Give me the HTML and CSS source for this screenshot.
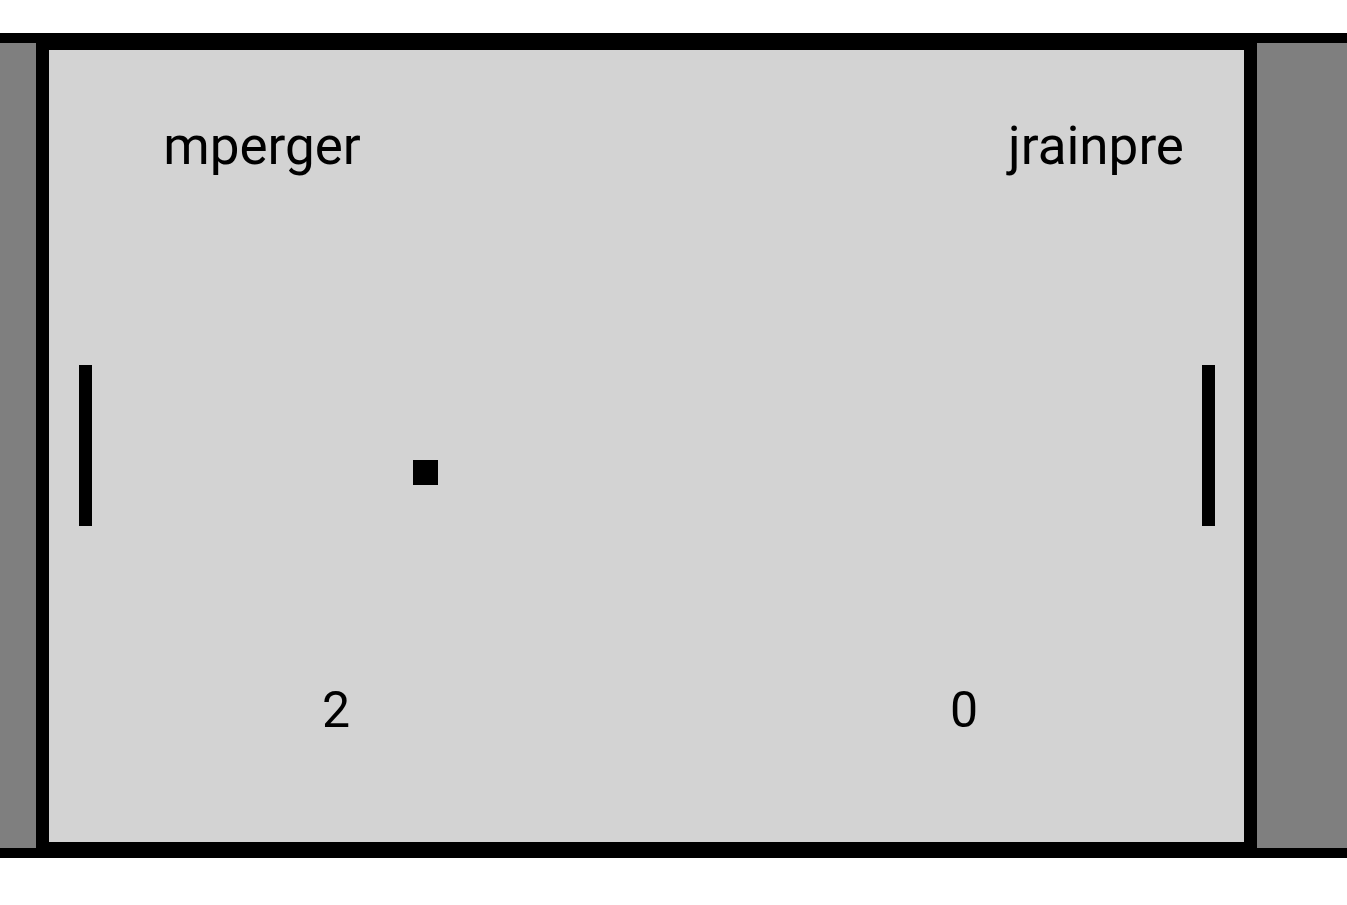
FILE: index.html
```html
<!DOCTYPE html>
<html>
<head>
<meta charset="utf-8">
<link rel="stylesheet" href="styles.css">
</head>
<body>
<div class="stage">
  <div class="court">
    <div class="field">
      <div class="label name name-left">mperger</div>
      <div class="label name name-right">jrainpre</div>
      <div class="paddle paddle-left"></div>
      <div class="paddle paddle-right"></div>
      <div class="ball"></div>
      <div class="label score score-left">2</div>
      <div class="label score score-right">0</div>
    </div>
  </div>
</div>
</body>
</html>
```
FILE: styles.css
```css
html, body {
  margin: 0;
  padding: 0;
  background: #ffffff;
}
body {
  padding-top: 33px;
  font-family: Roboto, "Liberation Sans", sans-serif;
}
.stage {
  background: #7f7f7f;
  border-top: 10px solid #000;
  border-bottom: 10px solid #000;
  height: 805px;
  display: flex;
}
.court {
  margin-left: 36px;
  width: 1221px;
  height: 805px;
  box-sizing: border-box;
  background: #000;
  padding: 7px 13px 6px 13px;
}
.field {
  position: relative;
  width: 100%;
  height: 100%;
  background: #d3d3d3;
}
.label {
  position: absolute;
  width: 240px;
  text-align: center;
  color: #000;
}
.name {
  top: 70px;
  font-size: 53px;
  line-height: 53px;
}
.name-left { left: 93px; }
.name-right { left: 927px; }
.score {
  top: 635px;
  font-size: 50px;
  line-height: 50px;
}
.score-left { left: 167px; }
.score-right { left: 795px; }
.paddle {
  position: absolute;
  top: 315px;
  width: 13px;
  height: 161px;
  background: #000;
}
.paddle-left { left: 30px; }
.paddle-right { left: 1153px; }
.ball {
  position: absolute;
  left: 364px;
  top: 410px;
  width: 25px;
  height: 25px;
  background: #000;
}
```
